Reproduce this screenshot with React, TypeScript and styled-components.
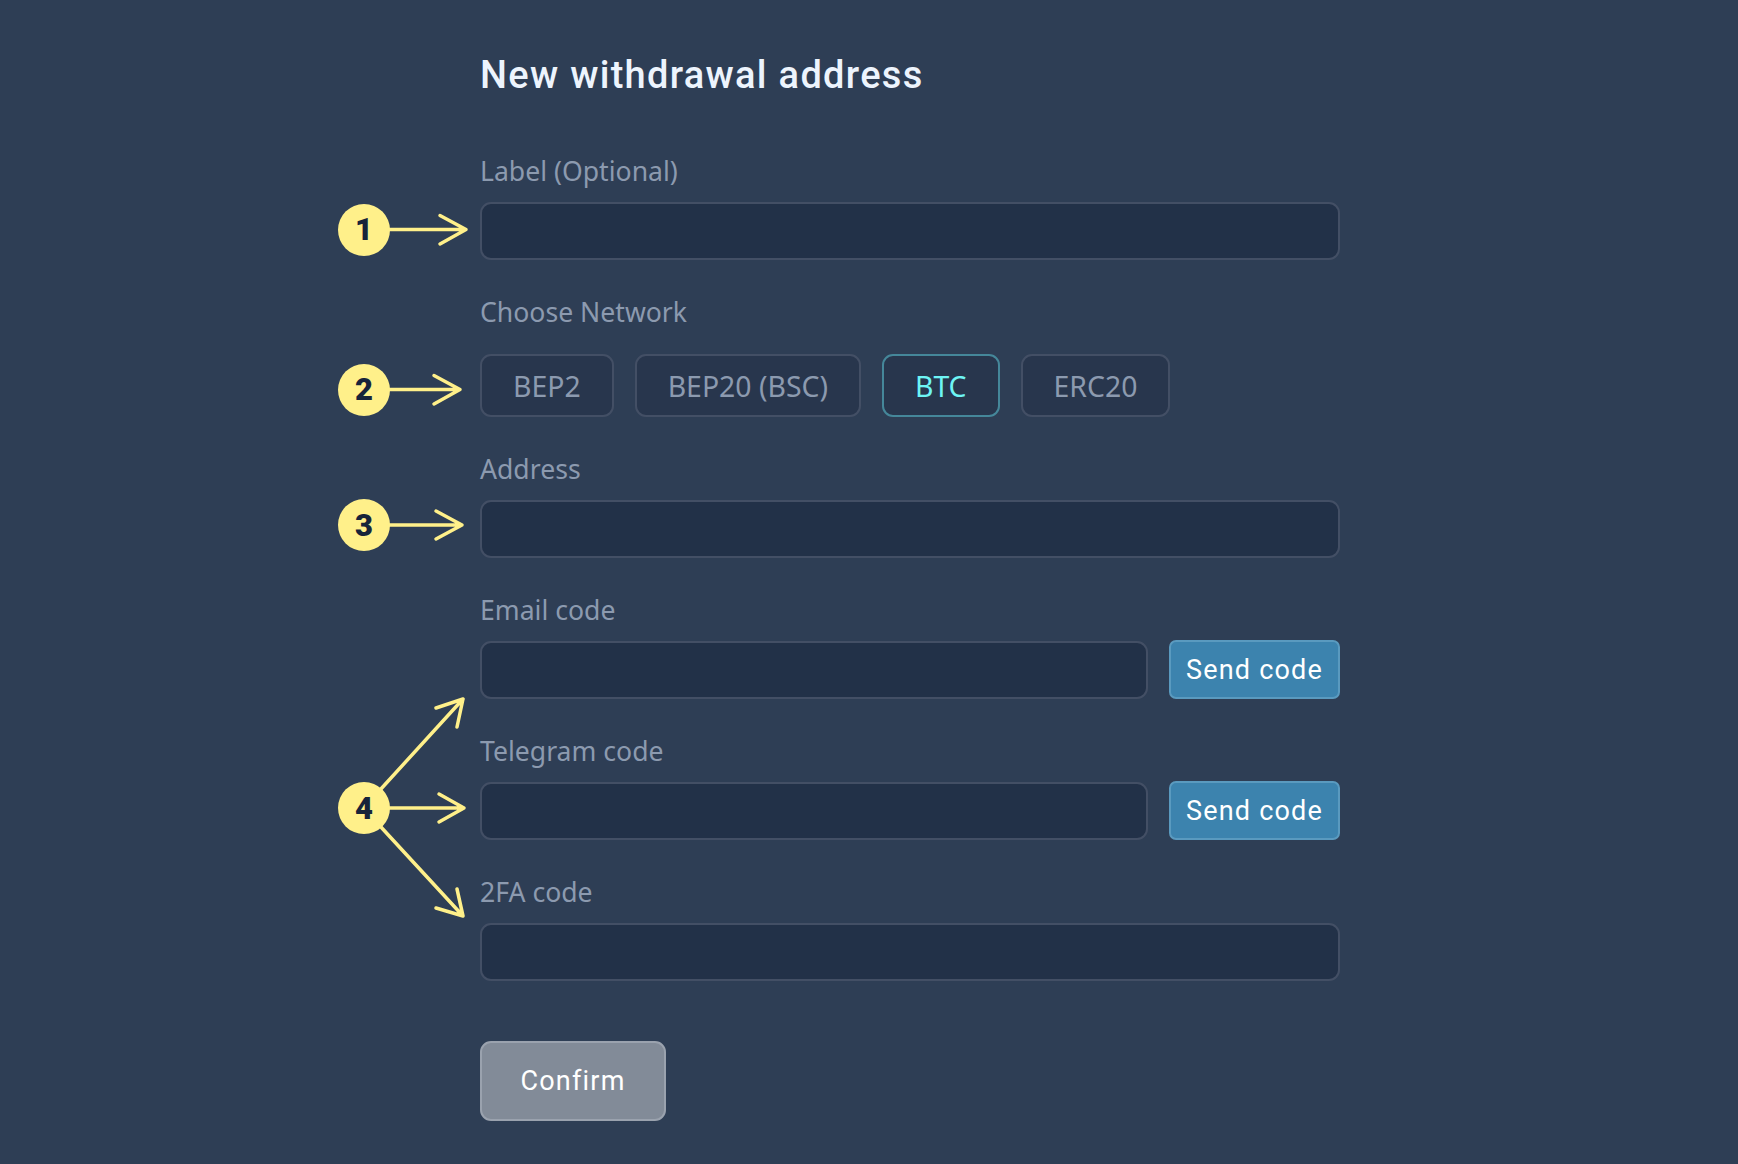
import * as React from 'react';
import styled, { createGlobalStyle } from 'styled-components';

const GlobalStyle = createGlobalStyle`
  html, body {
    margin: 0;
    padding: 0;
    background: #2e3e55;
  }
`;

const Page = styled.div`
  position: relative;
  width: 1738px;
  height: 1164px;
  overflow: hidden;
  background: #2e3e55;
  font-family: "Noto Sans", "Liberation Sans", sans-serif;
`;

const Form = styled.form`
  display: flex;
  flex-direction: column;
  width: 860px;
  margin-left: 480px;
  padding-top: 51px;
`;

const Title = styled.h1`
  margin: 0 0 51px;
  height: 48px;
  line-height: 48px;
  font-family: Roboto, "Liberation Sans", sans-serif;
  font-size: 38px;
  font-weight: 500;
  letter-spacing: 1.3px;
  color: #edf4fd;
`;

const Field = styled.div`
  display: flex;
  flex-direction: column;
  margin-bottom: 31px;
`;

const Label = styled.label`
  height: 40px;
  line-height: 42px;
  font-size: 26.6px;
  color: #8c9aaf;
  margin-bottom: 12px;
`;

const InputRow = styled.div`
  display: flex;
  align-items: flex-start;
  gap: 21px;
`;

const Input = styled.input`
  flex: 1 1 auto;
  min-width: 0;
  height: 58px;
  box-sizing: border-box;
  background: #223148;
  border: 2px solid #434f65;
  border-radius: 11px;
  outline: none;
`;

const SendButton = styled.button`
  flex: none;
  width: 171px;
  height: 59px;
  margin-top: -1px;
  box-sizing: border-box;
  background: #3c83ae;
  border: 2px solid #5a9abf;
  border-radius: 7px;
  color: #fff;
  font-family: Roboto, "Liberation Sans", sans-serif;
  font-size: 27px;
  font-weight: 400;
  letter-spacing: 1.2px;
  padding: 0;
`;

const Chips = styled.div`
  display: flex;
  gap: 21px;
  margin-top: 11px;
`;

const Chip = styled.button<{ $active?: boolean }>`
  height: 63px;
  box-sizing: border-box;
  padding: 0 31px;
  background: #28364d;
  border: 2px solid ${p => (p.$active ? '#45879a' : '#434f65')};
  border-radius: 11px;
  color: ${p => (p.$active ? '#6ef5f5' : '#8c9aaf')};
  font-family: "Noto Sans", "Liberation Sans", sans-serif;
  font-size: 28.4px;
`;

const ConfirmButton = styled.button`
  align-self: flex-start;
  width: 186px;
  height: 80px;
  margin-top: 29px;
  box-sizing: border-box;
  background: #828b98;
  border: 2px solid #9aa2ae;
  border-radius: 11px;
  color: #fff;
  font-family: Roboto, "Liberation Sans", sans-serif;
  font-size: 27px;
  font-weight: 400;
  letter-spacing: 1.2px;
  padding: 0;
`;

const Arrows = styled.svg`
  position: absolute;
  left: 0;
  top: 0;
  pointer-events: none;
`;

const Badge = styled.div<{ $y: number }>`
  position: absolute;
  left: 338px;
  top: ${p => p.$y - 26}px;
  width: 52px;
  height: 52px;
  border-radius: 50%;
  background: #fff08a;
  color: #17243a;
  display: flex;
  align-items: center;
  justify-content: center;
  font-family: Roboto, "Liberation Sans", sans-serif;
  font-size: 31px;
  font-weight: 900;
`;

const arrowPaths = [
  'M388 229.5H466M440 215.5L466 229.5L440 244',
  'M388 389.5H460M434 375.5L460 389.5L434 404',
  'M388 525H462M436 511L462 525L436 539',
  'M380 790L463 699M436 708L463 699L457 727',
  'M388 808H464M439 794L464 808L439 822',
  'M380 826L463 916M436 908L463 916L457 889',
];

export default function App() {
  return (
    <Page>
      <GlobalStyle />
      <Form>
        <Title>New withdrawal address</Title>
        <Field>
          <Label>Label (Optional)</Label>
          <Input />
        </Field>
        <Field>
          <Label>Choose Network</Label>
          <Chips>
            <Chip type="button">BEP2</Chip>
            <Chip type="button">BEP20 (BSC)</Chip>
            <Chip type="button" $active>BTC</Chip>
            <Chip type="button">ERC20</Chip>
          </Chips>
        </Field>
        <Field>
          <Label>Address</Label>
          <Input />
        </Field>
        <Field>
          <Label>Email code</Label>
          <InputRow>
            <Input />
            <SendButton type="button">Send code</SendButton>
          </InputRow>
        </Field>
        <Field>
          <Label>Telegram code</Label>
          <InputRow>
            <Input />
            <SendButton type="button">Send code</SendButton>
          </InputRow>
        </Field>
        <Field>
          <Label>2FA code</Label>
          <Input />
        </Field>
        <ConfirmButton type="button">Confirm</ConfirmButton>
      </Form>
      <Arrows width="1738" height="1164" viewBox="0 0 1738 1164" fill="none">
        {arrowPaths.map(d => (
          <path key={d} d={d} stroke="#fff08a" strokeWidth="3.5" strokeLinecap="round" strokeLinejoin="round" />
        ))}
      </Arrows>
      <Badge $y={229.5}>1</Badge>
      <Badge $y={389.5}>2</Badge>
      <Badge $y={525}>3</Badge>
      <Badge $y={808}>4</Badge>
    </Page>
  );
}
